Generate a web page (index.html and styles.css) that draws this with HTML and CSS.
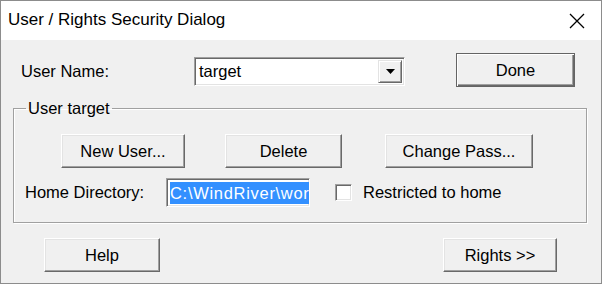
FILE: index.html
```html
<!DOCTYPE html>
<html lang="en">
<head>
  <meta charset="UTF-8" />
  <title>User / Rights Security Dialog</title>
  <link rel="stylesheet" href="styles.css">
</head>
<body>
  <div class="window">
    <div class="titlebar">
      <div class="title">User / Rights Security Dialog</div>
      <div class="close">
        <svg width="16" height="16" viewBox="0 0 16 16">
          <path d="M1 1 L15 15 M15 1 L1 15" stroke="#000" stroke-width="1.3" fill="none"/>
        </svg>
      </div>
    </div>

    <div class="content">
      <div class="row-top">
        <div class="label user-label">User Name:</div>
        <div class="combo">
          <div class="combo-text">target</div>
          <div class="combo-btn">
            <svg width="9" height="5" viewBox="0 0 9 5"><path d="M0 0 H9 L4.5 5 Z" fill="#000"/></svg>
          </div>
        </div>
        <button class="btn btn-default done-btn">Done</button>
      </div>

      <fieldset class="group">
        <legend>User target</legend>
        <div class="row-buttons">
          <button class="btn new-btn">New User...</button>
          <button class="btn delete-btn">Delete</button>
          <button class="btn pass-btn">Change Pass...</button>
        </div>
        <div class="row-home">
          <div class="label home-label">Home Directory:</div>
          <div class="edit"><span class="selected">C:\WindRiver\workspace</span></div>
          <div class="checkbox"></div>
          <div class="label">Restricted to home</div>
        </div>
      </fieldset>

      <div class="row-bottom">
        <button class="btn help-btn">Help</button>
        <button class="btn rights-btn">Rights &gt;&gt;</button>
      </div>
    </div>
  </div>
</body>
</html>
```

FILE: styles.css
```css
html, body {
  margin: 0;
  padding: 0;
}

body {
  font-family: 'Liberation Sans', Arial, sans-serif;
  font-size: 16.5px;
  color: #000;
  background-color: #ffffff;
}

.window {
  width: 602px;
  height: 284px;
  box-sizing: border-box;
  border: 1px solid #8c8c8c;
  display: flex;
  flex-direction: column;
}

.titlebar {
  height: 39px;
  background-color: #ffffff;
  display: flex;
  align-items: center;
  justify-content: space-between;
  padding: 0 16px 0 7px;
}

.title {
  font-size: 17px;
  padding-bottom: 2px;
}

.close {
  display: flex;
  padding-top: 1px;
}

.content {
  flex: 1;
  background-color: #f0f0f0;
  padding: 13px 0 0 0;
}

.label {
  white-space: nowrap;
}

/* first row */
.row-top {
  display: flex;
  align-items: center;
  height: 34px;
  padding-left: 20px;
}

.user-label {
  width: 173px;
  padding-top: 3px;
}

.combo {
  width: 211px;
  height: 29px;
  box-sizing: border-box;
  display: flex;
  margin-top: 3px;
  border-style: solid;
  border-width: 1px;
  border-color: #a0a0a0 #ffffff #ffffff #a0a0a0;
  box-shadow: inset 1px 1px #696969, inset -1px -1px #e3e3e3;
  background-color: #ffffff;
  padding: 2px;
}

.combo-text {
  flex: 1;
  padding-left: 2px;
  line-height: 23px;
}

.combo-btn {
  width: 24px;
  box-sizing: border-box;
  background-color: #f0f0f0;
  border-style: solid;
  border-width: 1px;
  border-color: #e3e3e3 #696969 #696969 #e3e3e3;
  box-shadow: inset 1px 1px #ffffff, inset -1px -1px #a0a0a0;
  display: flex;
  align-items: center;
  justify-content: center;
}

/* buttons */
.btn {
  font-family: 'Liberation Sans', Arial, sans-serif;
  font-size: 16.5px;
  color: #000;
  height: 34px;
  box-sizing: border-box;
  background-color: #f0f0f0;
  border-style: solid;
  border-width: 1px;
  border-color: #ffffff #696969 #696969 #ffffff;
  box-shadow: inset -1px -1px #a0a0a0, inset 1px 1px #e3e3e3;
  padding: 0;
}

.btn-default {
  border: 1px solid #646464;
  box-shadow: inset 1px 1px #ffffff, inset -1px -1px #696969, inset -2px -2px #a0a0a0;
}

.done-btn {
  width: 119px;
  margin-left: 51px;
}

/* group box */
.group {
  margin: 12px 14px 0 12px;
  padding: 16px 0 0 0;
  height: 124px;
  box-sizing: border-box;
  border: 1px solid #a0a0a0;
  box-shadow: inset 1px 1px #ffffff, 1px 1px #ffffff;
}

.group legend {
  padding: 0 2px;
  margin-left: 12px;
}

.row-buttons {
  display: flex;
  padding-left: 47px;
}

.new-btn {
  width: 124px;
}

.delete-btn {
  width: 117px;
  margin-left: 40px;
}

.pass-btn {
  width: 148px;
  margin-left: 43px;
}

.row-home {
  display: flex;
  align-items: center;
  margin-top: 10px;
  padding-left: 11px;
}

.home-label {
  width: 141px;
}

.edit {
  width: 144px;
  height: 29px;
  box-sizing: border-box;
  border-style: solid;
  border-width: 1px;
  border-color: #a0a0a0 #ffffff #ffffff #a0a0a0;
  box-shadow: inset 1px 1px #696969, inset -1px -1px #e3e3e3;
  background-color: #ffffff;
  padding: 3px 2px 2px 3px;
  overflow: hidden;
  white-space: nowrap;
}

.selected {
  display: inline-block;
  background-color: #3390ff;
  color: #ffffff;
  line-height: 22px;
  letter-spacing: 0.7px;
}

.checkbox {
  width: 17px;
  height: 17px;
  box-sizing: border-box;
  margin: 0 11px 0 25px;
  background-color: #ffffff;
  border-style: solid;
  border-width: 1px;
  border-color: #a0a0a0 #ffffff #ffffff #a0a0a0;
  box-shadow: inset 1px 1px #696969, inset -1px -1px #e3e3e3;
}

/* bottom row */
.row-bottom {
  display: flex;
  margin-top: 15px;
  padding-left: 43px;
}

.help-btn {
  width: 116px;
}

.rights-btn {
  width: 114px;
  margin-left: 283px;
}
```
